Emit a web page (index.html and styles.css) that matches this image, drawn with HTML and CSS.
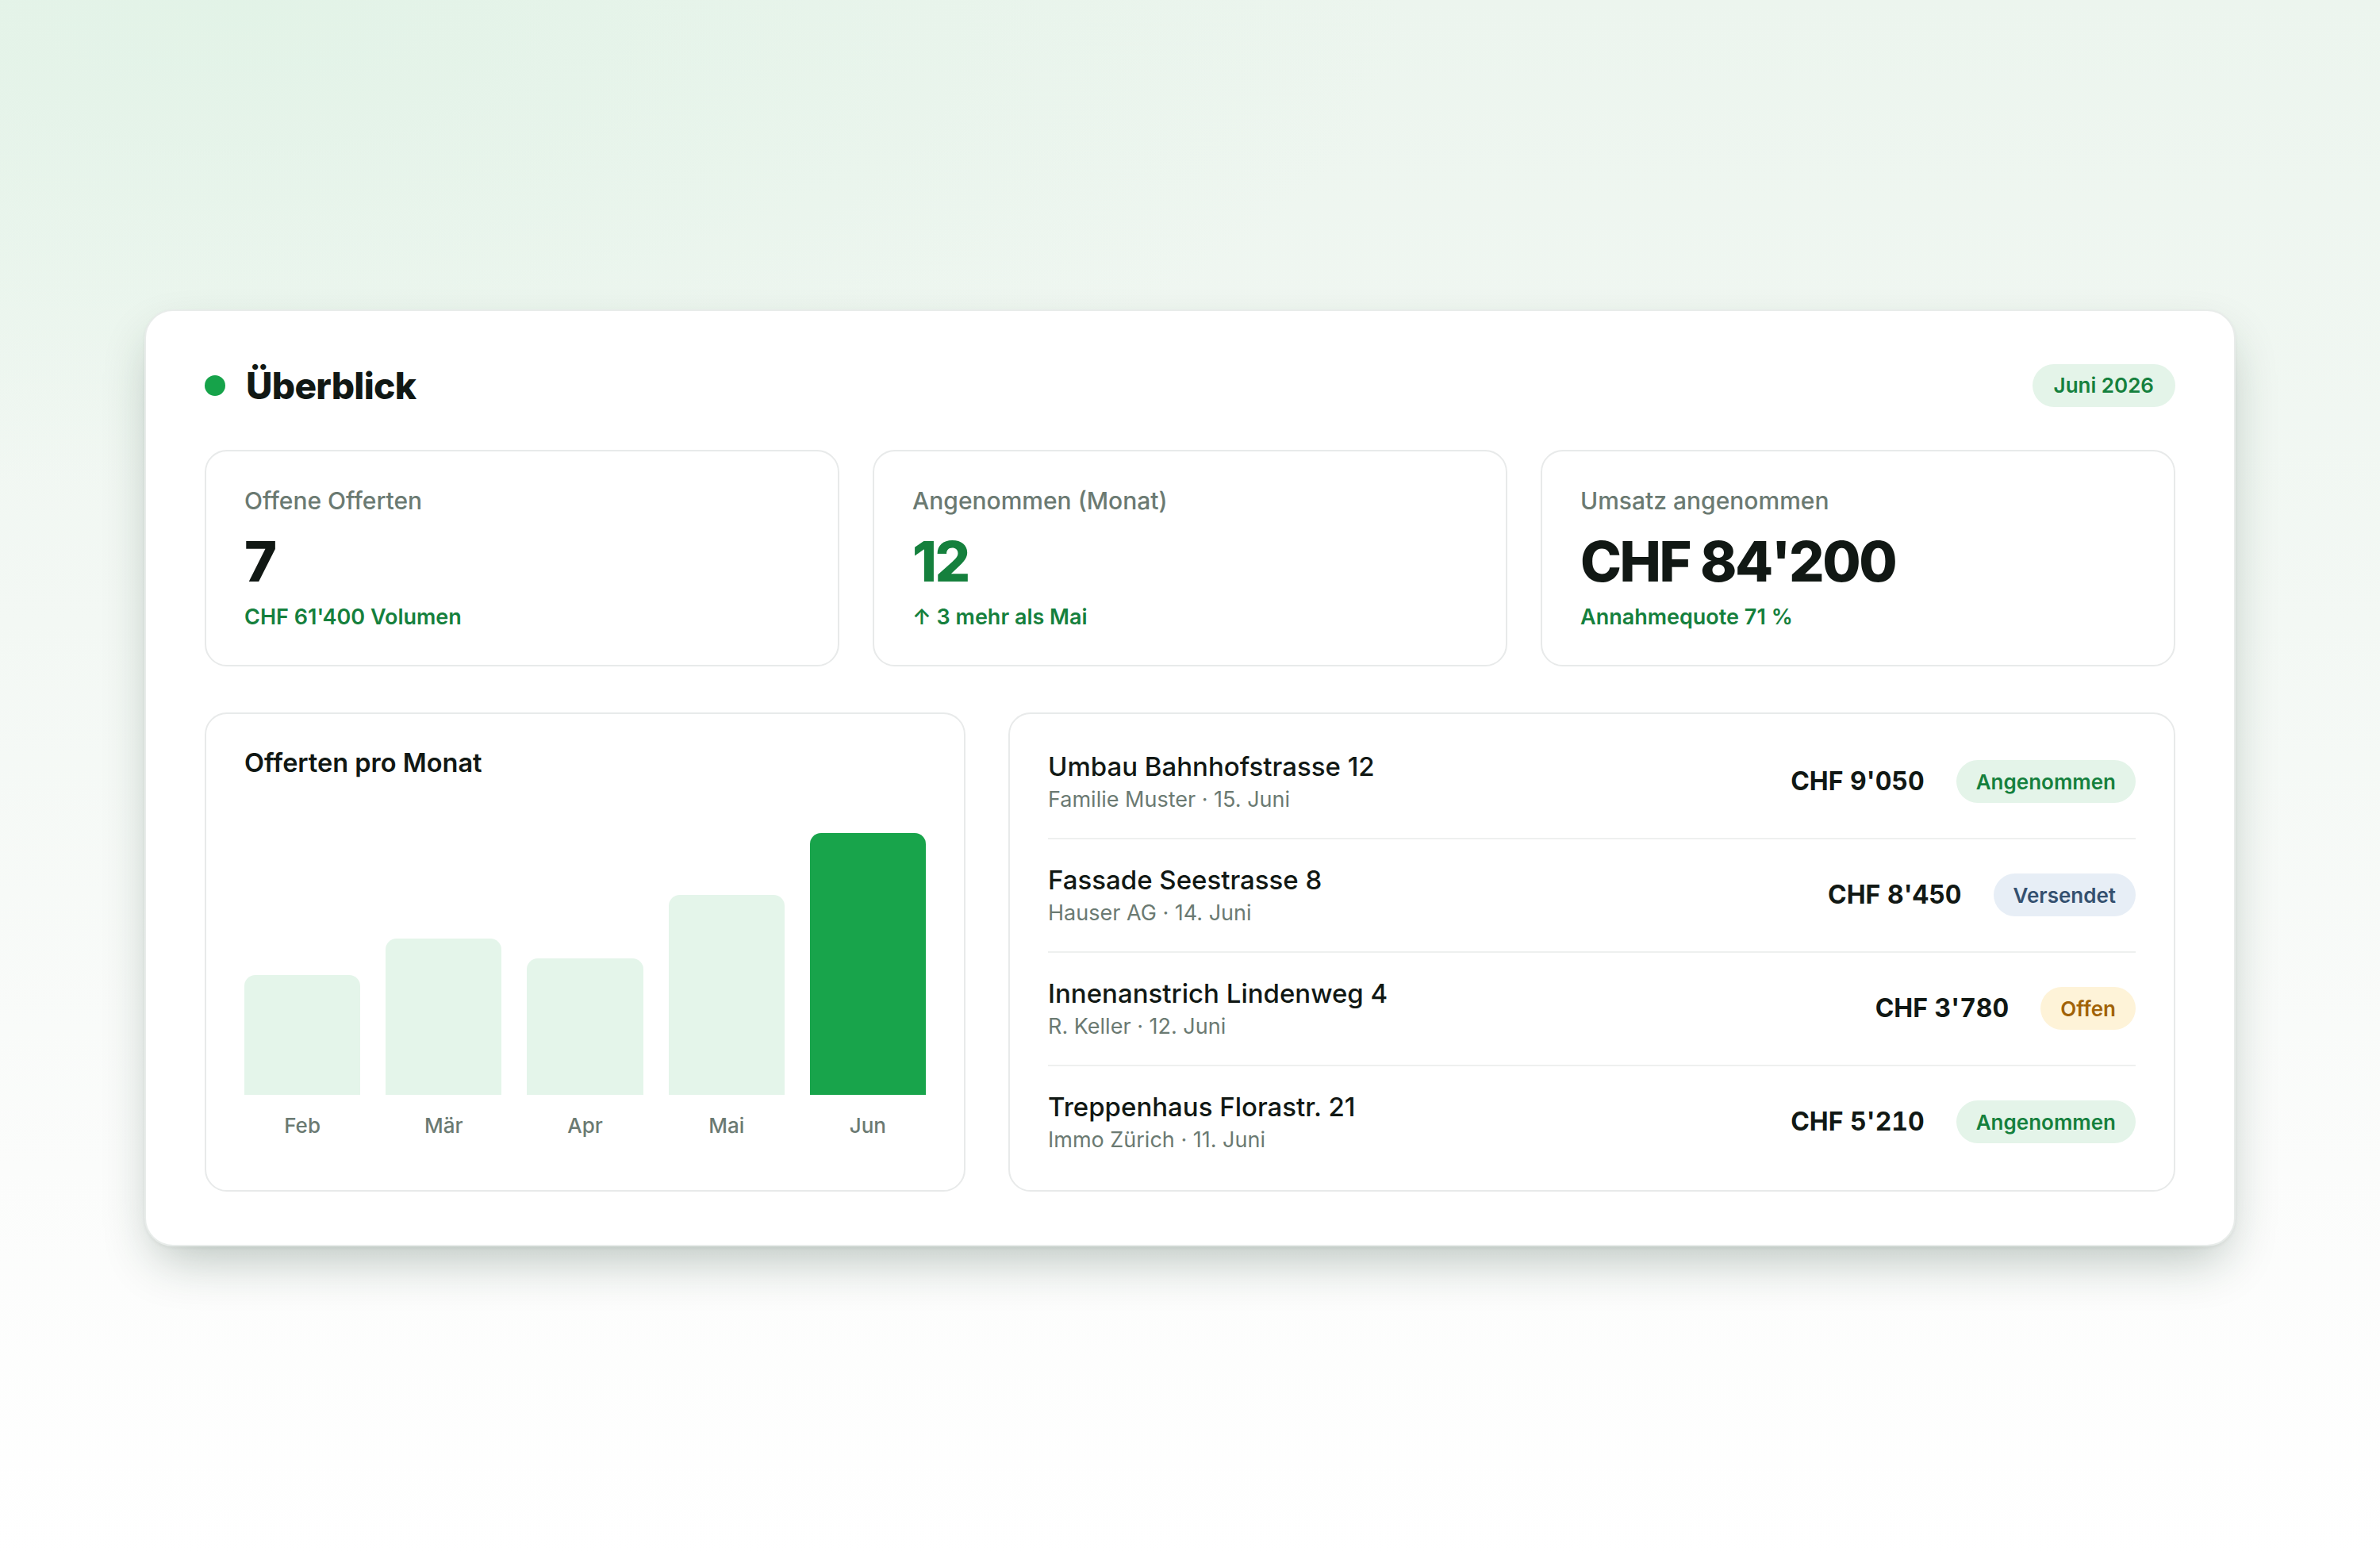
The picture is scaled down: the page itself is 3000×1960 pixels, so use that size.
FILE: index.html
```html
<!DOCTYPE html>
<html lang="de">
<head>
<meta charset="utf-8">
<title>Überblick</title>
<link rel="stylesheet" href="styles.css">
</head>
<body>
<main class="card">
  <header class="head">
    <div class="head-title">
      <span class="dot"></span>
      <h1>Überblick</h1>
    </div>
    <span class="pill">Juni 2026</span>
  </header>

  <section class="stats">
    <div class="stat">
      <div class="stat-label">Offene Offerten</div>
      <div class="stat-value">7</div>
      <div class="stat-sub">CHF 61'400 Volumen</div>
    </div>
    <div class="stat">
      <div class="stat-label">Angenommen (Monat)</div>
      <div class="stat-value green">12</div>
      <div class="stat-sub">↑ 3 mehr als Mai</div>
    </div>
    <div class="stat">
      <div class="stat-label">Umsatz angenommen</div>
      <div class="stat-value">CHF 84'200</div>
      <div class="stat-sub">Annahmequote 71 %</div>
    </div>
  </section>

  <section class="bottom">
    <div class="panel chart">
      <h2 class="chart-title">Offerten pro Monat</h2>
      <div class="bars">
        <div class="col"><div class="bar-wrap"><div class="bar" style="height:45.5%"></div></div><span class="month">Feb</span></div>
        <div class="col"><div class="bar-wrap"><div class="bar" style="height:59.7%"></div></div><span class="month">Mär</span></div>
        <div class="col"><div class="bar-wrap"><div class="bar" style="height:52.1%"></div></div><span class="month">Apr</span></div>
        <div class="col"><div class="bar-wrap"><div class="bar" style="height:76.1%"></div></div><span class="month">Mai</span></div>
        <div class="col"><div class="bar-wrap"><div class="bar active" style="height:100%"></div></div><span class="month">Jun</span></div>
      </div>
    </div>

    <div class="panel list">
      <div class="row">
        <div class="row-text">
          <div class="row-title">Umbau Bahnhofstrasse 12</div>
          <div class="row-sub">Familie Muster · 15. Juni</div>
        </div>
        <div class="row-amount">CHF 9'050</div>
        <span class="badge ok">Angenommen</span>
      </div>
      <div class="row">
        <div class="row-text">
          <div class="row-title">Fassade Seestrasse 8</div>
          <div class="row-sub">Hauser AG · 14. Juni</div>
        </div>
        <div class="row-amount">CHF 8'450</div>
        <span class="badge sent">Versendet</span>
      </div>
      <div class="row">
        <div class="row-text">
          <div class="row-title">Innenanstrich Lindenweg 4</div>
          <div class="row-sub">R. Keller · 12. Juni</div>
        </div>
        <div class="row-amount">CHF 3'780</div>
        <span class="badge open">Offen</span>
      </div>
      <div class="row">
        <div class="row-text">
          <div class="row-title">Treppenhaus Florastr. 21</div>
          <div class="row-sub">Immo Zürich · 11. Juni</div>
        </div>
        <div class="row-amount">CHF 5'210</div>
        <span class="badge ok">Angenommen</span>
      </div>
    </div>
  </section>
</main>
</body>
</html>
```

FILE: styles.css
```css
* { box-sizing: border-box; }

html, body { height: 100%; }

body {
  margin: 0;
  min-height: 100vh;
  display: flex;
  align-items: center;
  justify-content: center;
  font-family: "Inter", "Noto Sans", sans-serif;
  color: #111814;
  background:
    radial-gradient(ellipse 70% 45% at 10% 0%, rgba(222, 242, 228, 0.7), rgba(222, 242, 228, 0) 70%),
    linear-gradient(180deg, #ecf5ee 0%, #f3f8f4 40%, #fbfcfb 75%, #ffffff 100%);
}

.card {
  width: 2636px;
  background: #ffffff;
  border: 2px solid #e8ecea;
  border-radius: 36px;
  padding: 67px 74px;
  box-shadow:
    0 2px 4px rgba(16, 40, 28, 0.05),
    0 28px 64px -14px rgba(20, 52, 36, 0.30);
}

/* header */
.head {
  display: flex;
  align-items: center;
  justify-content: space-between;
  height: 54px;
  margin-bottom: 54px;
}
.head-title {
  display: flex;
  align-items: center;
  gap: 26px;
}
.dot {
  width: 26px;
  height: 26px;
  border-radius: 50%;
  background: #16a34a;
}
h1 {
  margin: 0;
  font-size: 46px;
  line-height: 54px;
  font-weight: 800;
  letter-spacing: -0.015em;
  color: #111814;
}
.pill {
  display: inline-flex;
  align-items: center;
  height: 54px;
  padding: 0 27px;
  border-radius: 27px;
  background: #e4f4e9;
  color: #15803d;
  font-size: 26px;
  font-weight: 600;
}

/* stats */
.stats {
  display: grid;
  grid-template-columns: repeat(3, 1fr);
  gap: 42px;
  margin-bottom: 58px;
}
.stat {
  height: 273px;
  border: 2px solid #e8eaea;
  border-radius: 28px;
  padding: 44px 48px 0;
}
.stat-label {
  font-size: 30px;
  line-height: 36px;
  font-weight: 500;
  color: #6b7a72;
}
.stat-value {
  margin-top: 24px;
  font-size: 70px;
  line-height: 70px;
  font-weight: 800;
  letter-spacing: -0.035em;
  color: #111814;
}
.stat-value.green { color: #15803d; }
.stat-sub {
  margin-top: 18px;
  font-size: 27px;
  line-height: 34px;
  font-weight: 600;
  color: #15803d;
}

/* bottom */
.bottom {
  display: grid;
  grid-template-columns: 959px 1fr;
  gap: 54px;
}
.panel {
  border: 2px solid #e8eaea;
  border-radius: 28px;
}
.chart {
  padding: 42px 48px 0;
  display: flex;
  flex-direction: column;
}
.chart-title {
  margin: 0;
  font-size: 32.5px;
  line-height: 40px;
  font-weight: 600;
  color: #111814;
}
.bars {
  margin-top: 68px;
  display: grid;
  grid-template-columns: repeat(5, 1fr);
  gap: 32px;
}
.col {
  display: flex;
  flex-direction: column;
  align-items: center;
}
.bar-wrap {
  width: 100%;
  height: 330px;
  display: flex;
  align-items: flex-end;
}
.bar {
  width: 100%;
  background: #e4f5ea;
  border-radius: 14px 14px 0 0;
}
.bar.active { background: #18a44b; }
.month {
  margin-top: 22px;
  font-size: 26px;
  line-height: 34px;
  font-weight: 500;
  color: #6b7a72;
}

.list {
  padding: 15px 48px;
}
.row {
  display: flex;
  align-items: center;
  padding: 30px 0 30px;
  border-bottom: 2px solid #eef0ef;
}
.row:last-child { border-bottom: none; }
.row-text { flex: 1; min-width: 0; }
.row-title {
  font-size: 33px;
  line-height: 42px;
  font-weight: 500;
  color: #111814;
}
.row-sub {
  margin-top: 2px;
  font-size: 27px;
  line-height: 37px;
  font-weight: 400;
  color: #6b7a72;
}
.row-amount {
  font-size: 32px;
  line-height: 40px;
  font-weight: 700;
  font-variant-numeric: tabular-nums;
  color: #111814;
  margin-right: 40px;
}
.badge {
  display: inline-flex;
  align-items: center;
  height: 54px;
  padding: 0 25px;
  border-radius: 27px;
  font-size: 26px;
  font-weight: 600;
}
.badge.ok { background: #e4f4e9; color: #15803d; }
.badge.sent { background: #e7eef6; color: #34506f; }
.badge.open { background: #fef3d8; color: #a16207; }
```
